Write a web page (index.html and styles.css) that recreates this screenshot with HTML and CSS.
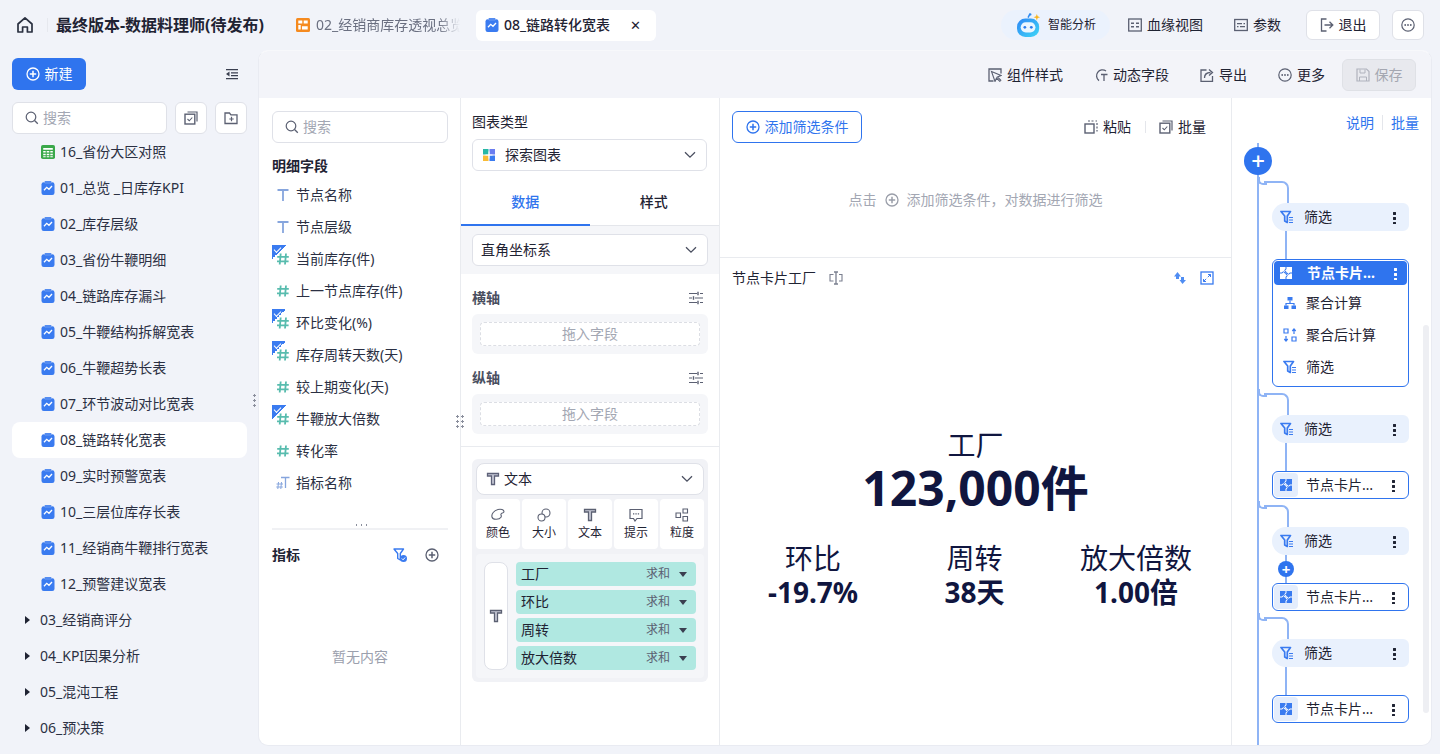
FILE: index.html
```html
<!DOCTYPE html>
<html lang="zh-CN">
<head>
  <meta charset="UTF-8" />
  <title>最终版本-数据料理师(待发布)</title>
  <link rel="stylesheet" href="styles.css">
</head>
<body>
  <svg class="sprite" xmlns="http://www.w3.org/2000/svg">
    <symbol id="i-home" viewBox="0 0 18 18"><path d="M2 8 9 1.800 16 8v8h-4.600v-5H6.600v5H2z" fill="none" stroke="currentColor" stroke-width="1.700" stroke-linejoin="round"/></symbol>
    <symbol id="i-add" viewBox="0 0 14 14"><circle cx="7" cy="7" r="6" fill="none" stroke="currentColor" stroke-width="1.300"/><path d="M7 3.800v6.400M3.800 7h6.400" stroke="currentColor" stroke-width="1.500"/></symbol>
    <symbol id="i-outdent" viewBox="0 0 14 14"><path d="M1 2h12v1.300H1zM6 5.200h7v1.300H6zM6 8h7v1.300H6zM1 11h12v1.300H1z" fill="currentColor"/><path d="M4.500 4.600v5L1 7.100z" fill="currentColor"/></symbol>
    <symbol id="i-search" viewBox="0 0 14 14"><circle cx="6" cy="6" r="4.800" fill="none" stroke="currentColor" stroke-width="1.200"/><path d="m9.500 9.500 3.300 3.300" stroke="currentColor" stroke-width="1.300"/></symbol>
    <symbol id="i-batch" viewBox="0 0 14 14"><path d="M3.500 1h9.500v9.500" fill="none" stroke="currentColor" stroke-width="1.200"/><rect x="1" y="3.200" width="9.800" height="9.800" fill="none" stroke="currentColor" stroke-width="1.400"/><path d="m3.500 8 1.800 1.800 3-3.300" fill="none" stroke="currentColor" stroke-width="1.100"/></symbol>
    <symbol id="i-folder" viewBox="0 0 14 14"><path d="M1 2h4.500l1.400 1.800H13V12.500H1z" fill="none" stroke="currentColor" stroke-width="1.300"/><path d="M7.500 5.800v4.400M5.300 8h4.400" stroke="currentColor" stroke-width="1.200"/></symbol>
    <symbol id="i-chart" viewBox="0 0 14 14"><rect x="0.500" y="1.200" width="13" height="12.800" rx="2.200" fill="#3a7bf0"/><rect x="3.500" y="0" width="7" height="2" rx="0.800" fill="#3a7bf0" stroke="#f1f3f9" stroke-width="0.300"/><path d="m3 9.300 2.700-3 2.300 2 3-3.300" fill="none" stroke="#fff" stroke-width="1.300"/></symbol>
    <symbol id="i-table" viewBox="0 0 14 14"><rect width="14" height="14" rx="1.800" fill="#3aa84a"/><path d="M2.200 3h9.600v1.700H2.200zM2.200 6h2.500v1.600H2.200zM5.700 6h2.600v1.600H5.700zM9.300 6h2.500v1.600H9.300zM2.200 8.700h2.500v1.600H2.200zM5.700 8.700h2.600v1.600H5.700zM9.300 8.700h2.500v1.600H9.300zM2.200 11.300h2.500v1H2.200zM5.700 11.300h2.600v1H5.700zM9.300 11.300h2.500v1H9.300z" fill="#fff"/></symbol>
    <symbol id="i-orange" viewBox="0 0 14 14"><rect width="14" height="14" rx="1.500" fill="#f58a1f"/><path d="M2.300 2.400h4v3.200h-4zM7.700 2.400h4v3.200h-4zM2.300 7h2.400v4.600H2.300zM6 8.300h5.700v3.300H6z" fill="#fff"/></symbol>
    <symbol id="i-bot" viewBox="0 0 28 26"><path d="M13 5 15 1" stroke="#2f8cf2" stroke-width="1.600"/><circle cx="15.300" cy="1.500" r="1.300" fill="#2f8cf2"/><path d="M22.500 1l.9 2.600 2.600.9-2.600.9-.9 2.600-.9-2.600-2.600-.9 2.600-.9z" fill="#f8b51e"/><rect x="1" y="6" width="24" height="20" rx="9" fill="url(#botfill)"/><rect x="5" y="10" width="16" height="11" rx="5.500" fill="#eaf6ff"/><circle cx="9.500" cy="15.500" r="1.500" fill="#2a7bec"/><circle cx="16.500" cy="15.500" r="1.500" fill="#2a7bec"/><defs><linearGradient id="botfill" x1="0" y1="0" x2="1" y2="1"><stop offset="0" stop-color="#2e86f5"/><stop offset="1" stop-color="#3dd7f7"/></linearGradient></defs></symbol>
    <symbol id="i-lineage" viewBox="0 0 14 14"><rect x="0.700" y="1" width="12.600" height="12" fill="none" stroke="currentColor" stroke-width="1.300"/><path d="M3 4.500h3v1.500H3zM3 8h3v1.500H3zM8 4.500h3v1.500H8zM8 8h3v1.500H8z" fill="currentColor"/></symbol>
    <symbol id="i-param" viewBox="0 0 14 14"><rect x="0.700" y="1.500" width="12.600" height="11" fill="none" stroke="currentColor" stroke-width="1.300"/><path d="M3 5h5v1.200H3zM9.500 5H11v1.200H9.500zM3 8h1.500v1.200H3zM6 8h5v1.200H6z" fill="currentColor"/></symbol>
    <symbol id="i-exit" viewBox="0 0 14 14"><path d="M6.500 1H1.500v12h5" fill="none" stroke="currentColor" stroke-width="1.300"/><path d="M4.500 7h8M9.500 3.800 12.800 7l-3.300 3.200" fill="none" stroke="currentColor" stroke-width="1.300"/></symbol>
    <symbol id="i-more" viewBox="0 0 14 14"><circle cx="7" cy="7" r="6.200" fill="none" stroke="currentColor" stroke-width="1.200"/><circle cx="4.200" cy="7" r="0.900" fill="currentColor"/><circle cx="7" cy="7" r="0.900" fill="currentColor"/><circle cx="9.800" cy="7" r="0.900" fill="currentColor"/></symbol>
    <symbol id="i-style" viewBox="0 0 14 14"><path d="M5.500 13H1V1h12v4.500" fill="none" stroke="currentColor" stroke-width="1.300"/><path d="m3.500 3.500 9.500 4-3.500 1.500 3.300 3.300-1 1L8.500 10 7 13.500z" fill="none" stroke="currentColor" stroke-width="1.100"/></symbol>
    <symbol id="i-dyn" viewBox="0 0 14 14"><path d="M12 3A5.800 5.800 0 1 0 5 12.600" fill="none" stroke="currentColor" stroke-width="1.300"/><path d="M7 6.500h6.500M10 6.500V13" stroke="currentColor" stroke-width="1.300"/></symbol>
    <symbol id="i-export" viewBox="0 0 14 14"><path d="M6.500 2H1v11.500h11.500V8" fill="none" stroke="currentColor" stroke-width="1.300"/><path d="M4.500 10c0-3.500 2.500-5.500 6-5.500M9 1.500l3.500 3-3.500 3" fill="none" stroke="currentColor" stroke-width="1.300"/></symbol>
    <symbol id="i-save" viewBox="0 0 14 14"><path d="M1 1h9.500L13 3.500V13H1z" fill="none" stroke="currentColor" stroke-width="1.200"/><path d="M4 1.500v3.500h5V1.500M3.500 13V9h7v4" fill="none" stroke="currentColor" stroke-width="1"/></symbol>
    <symbol id="i-paste" viewBox="0 0 14 14"><rect x="1" y="4" width="9" height="9" fill="none" stroke="currentColor" stroke-width="1.400"/><path d="M4 1h2M7.500 1h2M11.500 1H13M13 3v2M13 6.500v2M13 10v1.500" stroke="currentColor" stroke-width="1.200"/></symbol>
    <symbol id="i-t" viewBox="0 0 14 14"><path d="M1.500 1.500h11v2.500h-4v8.500h-3V4h-4z" fill="#c9cbd8" stroke="currentColor" stroke-width="1.300"/></symbol>
    <symbol id="i-tfield" viewBox="0 0 14 14"><path d="M1.500 2h11M7 2v11" stroke="#86a5dd" stroke-width="1.800"/></symbol>
    <symbol id="i-hash" viewBox="0 0 14 14"><path d="M4.700 1.500 3.700 12.500M10 1.500 9 12.500M1.200 4.800h11.600M1 9.300h11.600" stroke="#58bcae" stroke-width="1.800"/></symbol>
    <symbol id="i-numt" viewBox="0 0 14 14"><path d="M5 1.500h8.500M9.500 1.500V12" stroke="#86a5dd" stroke-width="1.300"/><path d="M2.500 6 1.800 13M5.500 6 4.800 13M.5 8h6.500M.3 11h6.500" stroke="#86a5dd" stroke-width="1"/></symbol>
    <symbol id="i-filter" viewBox="0 0 14 14"><path d="M1 1.500h9.500L7.300 6v6.500L4.700 11V6z" fill="none" stroke="#3a7bf0" stroke-width="1.700" stroke-linejoin="round"/><path d="M9 7.500h4M9 10h4M9 12.500h4" stroke="#3a7bf0" stroke-width="1.200"/></symbol>
    <symbol id="i-filtercheck" viewBox="0 0 14 14"><path d="M1 1h9.500L7.300 5.500V12L4.700 10.500V5.500z" fill="none" stroke="#3a7bf0" stroke-width="1.400" stroke-linejoin="round"/><circle cx="10.500" cy="10.500" r="3.500" fill="#3a7bf0"/><path d="m8.800 10.500 1.300 1.300 2-2.300" fill="none" stroke="#fff" stroke-width="1"/></symbol>
    <symbol id="i-puzzle" viewBox="0 0 12 12"><rect width="12" height="12" fill="currentColor"/><path d="M0 6h2.300a1.200 1.200 0 0 1 2.400 0h2.600a1.200 1.200 0 0 0 2.400 0H12M6 0v2.300a1.200 1.200 0 0 0 0 2.400v2.600a1.200 1.200 0 0 1 0 2.400V12" fill="none" stroke="var(--cut)" stroke-width="1"/></symbol>
    <symbol id="i-aggr" viewBox="0 0 14 14"><path d="M4.500 1h5v3.500h-5zM1 9.500h4.500V13H1zM8.500 9.500H13V13H8.500z" fill="#3a7bf0"/><path d="M7 4.500v3M3 9.500v-2h8v2" fill="none" stroke="#3a7bf0" stroke-width="1.200"/></symbol>
    <symbol id="i-after" viewBox="0 0 14 14"><path d="M1 1h4v4H1zM9 9h4v4H9z" fill="none" stroke="#3a7bf0" stroke-width="1.200"/><path d="M11 6V1.500M9.300 3 11 1l1.700 2M3 8v4.500M1.300 11 3 13l1.700-2" fill="none" stroke="#3a7bf0" stroke-width="1.200"/></symbol>
    <symbol id="i-chev" viewBox="0 0 12 8"><path d="M1 1.200 6 6.200l5-5" fill="none" stroke="currentColor" stroke-width="1.300"/></symbol>
    <symbol id="i-sliders" viewBox="0 0 14 14"><path d="M0 2.500h8M11 2.500h3M0 7h3M6 7h8M0 11.500h8M11 11.500h3" stroke="currentColor" stroke-width="1.200"/><path d="M9 .8v3.400M4.500 5.300v3.400M9 9.800v3.400" stroke="currentColor" stroke-width="1.400"/></symbol>
    <symbol id="i-palette" viewBox="0 0 14 14"><path d="M1 9c-.8-3 2-6.500 6-7.500 3-.7 6 .2 6 2.300 0 1.500-2.500 1-3 2.200-.5 1 1 1.800 0 3.200C8.500 11.500 2 12.500 1 9z" fill="none" stroke="currentColor" stroke-width="1.100"/></symbol>
    <symbol id="i-size" viewBox="0 0 14 14"><circle cx="9" cy="5" r="4" fill="none" stroke="currentColor" stroke-width="1.100"/><circle cx="4.500" cy="9.500" r="3.500" fill="#fff" stroke="currentColor" stroke-width="1.100"/></symbol>
    <symbol id="i-tip" viewBox="0 0 14 14"><path d="M1 1.500h12v9H8L6 13 4.500 10.500H1z" fill="none" stroke="currentColor" stroke-width="1.200"/><path d="M4 5.300h1.300v1.300H4zM6.400 5.300h1.300v1.300H6.400zM8.800 5.300h1.300v1.300H8.800z" fill="currentColor"/></symbol>
    <symbol id="i-grain" viewBox="0 0 14 14"><path d="M1 5h4.500v4.500H1zM8 1h4.500v4H8zM8 8.500h4.500v4.500H8z" fill="none" stroke="currentColor" stroke-width="1.100"/></symbol>
    <symbol id="i-swap" viewBox="0 0 14 14"><path d="M4.500 1 8 5.500H6V8H3V5.500H1zM9.500 13 6.500 9H8V6h3v3h2z" fill="#4f8df3"/></symbol>
    <symbol id="i-expand" viewBox="0 0 14 14"><rect x="1" y="1" width="12" height="12" fill="none" stroke="#3a7bf0" stroke-width="1.300"/><path d="M8 3.500h2.500V6M10.500 3.500 7.800 6.200M6 10.500H3.500V8M3.500 10.500l2.700-2.700" fill="none" stroke="#3a7bf0" stroke-width="1"/></symbol>
    <symbol id="i-rename" viewBox="0 0 14 14"><path d="M4.500 3.500H1v6.500h3.500M10 3.500h3v6.500h-3" fill="none" stroke="currentColor" stroke-width="1.100"/><path d="M5 1h4M5 13h4M7 1v12" stroke="currentColor" stroke-width="1.300"/></symbol>
    <symbol id="i-explore" viewBox="0 0 12 12"><path d="M0 0h5.500v5.500H0z" fill="#27b7a5"/><path d="M6.500 0H12v5.500H6.500z" fill="#6a7df0"/><path d="M0 6.500h5.500V12H0z" fill="#f9bb35"/><path d="M6.500 6.500H12V12H6.500z" fill="#3a7bf0"/><path d="M6 2.500v7M2.500 6h7" stroke="#fff" stroke-width="0.900"/></symbol>
  </svg>

  <header class="topbar">
    <svg class="icon home"><use href="#i-home"/></svg>
    <span class="top-sep"></span>
    <h1 class="title">最终版本-数据料理师(待发布)</h1>
    <div class="tab tab-idle">
      <svg class="icon"><use href="#i-orange"/></svg>
      <span class="tab-clip">02_经销商库存透视总览</span>
    </div>
    <div class="tab tab-active">
      <svg class="icon"><use href="#i-chart"/></svg>
      <span>08_链路转化宽表</span>
      <span class="tab-close">✕</span>
    </div>
    <div class="top-actions">
      <div class="ai-pill"><svg class="bot"><use href="#i-bot"/></svg>智能分析</div>
      <div class="act act-lineage"><svg class="icon"><use href="#i-lineage"/></svg>血缘视图</div>
      <div class="act act-param"><svg class="icon"><use href="#i-param"/></svg>参数</div>
      <button class="btn-exit"><svg class="icon"><use href="#i-exit"/></svg>退出</button>
      <button class="btn-dots"><svg class="icon"><use href="#i-more"/></svg></button>
    </div>
  </header>

  <div class="layout">
    <aside class="sidebar">
      <div class="side-head">
        <button class="btn-new"><svg class="icon"><use href="#i-add"/></svg>新建</button>
        <svg class="icon outdent"><use href="#i-outdent"/></svg>
      </div>
      <div class="side-search">
        <div class="search-box"><svg class="icon"><use href="#i-search"/></svg>搜索</div>
        <button class="square"><svg class="icon"><use href="#i-batch"/></svg></button>
        <button class="square"><svg class="icon"><use href="#i-folder"/></svg></button>
      </div>
      <ul class="tree">
        <li class="leaf"><svg class="icon"><use href="#i-table"/></svg>16_省份大区对照</li>
        <li class="leaf"><svg class="icon"><use href="#i-chart"/></svg>01_总览 _日库存KPI</li>
        <li class="leaf"><svg class="icon"><use href="#i-chart"/></svg>02_库存层级</li>
        <li class="leaf"><svg class="icon"><use href="#i-chart"/></svg>03_省份牛鞭明细</li>
        <li class="leaf"><svg class="icon"><use href="#i-chart"/></svg>04_链路库存漏斗</li>
        <li class="leaf"><svg class="icon"><use href="#i-chart"/></svg>05_牛鞭结构拆解宽表</li>
        <li class="leaf"><svg class="icon"><use href="#i-chart"/></svg>06_牛鞭超势长表</li>
        <li class="leaf"><svg class="icon"><use href="#i-chart"/></svg>07_环节波动对比宽表</li>
        <li class="leaf current"><svg class="icon"><use href="#i-chart"/></svg>08_链路转化宽表</li>
        <li class="leaf"><svg class="icon"><use href="#i-chart"/></svg>09_实时预警宽表</li>
        <li class="leaf"><svg class="icon"><use href="#i-chart"/></svg>10_三层位库存长表</li>
        <li class="leaf"><svg class="icon"><use href="#i-chart"/></svg>11_经销商牛鞭排行宽表</li>
        <li class="leaf"><svg class="icon"><use href="#i-chart"/></svg>12_预警建议宽表</li>
        <li class="branch"><i class="caret"></i>03_经销商评分</li>
        <li class="branch"><i class="caret"></i>04_KPI因果分析</li>
        <li class="branch"><i class="caret"></i>05_混沌工程</li>
        <li class="branch"><i class="caret"></i>06_预决策</li>
      </ul>
      <span class="grip grip-side"></span>
    </aside>

    <main class="main">
      <div class="toolbar">
        <div class="tool"><svg class="icon"><use href="#i-style"/></svg>组件样式</div>
        <div class="tool"><svg class="icon"><use href="#i-dyn"/></svg>动态字段</div>
        <div class="tool"><svg class="icon"><use href="#i-export"/></svg>导出</div>
        <div class="tool"><svg class="icon"><use href="#i-more"/></svg>更多</div>
        <button class="btn-save"><svg class="icon"><use href="#i-save"/></svg>保存</button>
      </div>

      <div class="panels">
        <section class="fields">
          <div class="search-box field-search"><svg class="icon"><use href="#i-search"/></svg>搜索</div>
          <h3 class="field-title">明细字段</h3>
          <ul class="field-list">
            <li><svg class="icon"><use href="#i-tfield"/></svg>节点名称</li>
            <li><svg class="icon"><use href="#i-tfield"/></svg>节点层级</li>
            <li class="checked"><svg class="icon"><use href="#i-hash"/></svg>当前库存(件)</li>
            <li><svg class="icon"><use href="#i-hash"/></svg>上一节点库存(件)</li>
            <li class="checked"><svg class="icon"><use href="#i-hash"/></svg>环比变化(%)</li>
            <li class="checked"><svg class="icon"><use href="#i-hash"/></svg>库存周转天数(天)</li>
            <li><svg class="icon"><use href="#i-hash"/></svg>较上期变化(天)</li>
            <li class="checked"><svg class="icon"><use href="#i-hash"/></svg>牛鞭放大倍数</li>
            <li><svg class="icon"><use href="#i-hash"/></svg>转化率</li>
            <li><svg class="icon"><use href="#i-numt"/></svg>指标名称</li>
          </ul>
          <div class="field-divider"><span></span></div>
          <div class="metric-head">
            <h3>指标</h3>
            <svg class="icon"><use href="#i-filtercheck"/></svg>
            <svg class="icon add-metric"><use href="#i-add"/></svg>
          </div>
          <div class="empty">暂无内容</div>
          <span class="grip grip-fields"></span>
        </section>

        <section class="config">
          <div class="config-top">
            <label class="cfg-label">图表类型</label>
            <div class="select"><svg class="icon explore"><use href="#i-explore"/></svg>探索图表<svg class="chev"><use href="#i-chev"/></svg></div>
          </div>
          <div class="tabs">
            <div class="cfg-tab on">数据</div>
            <div class="cfg-tab">样式</div>
          </div>
          <div class="coord">
            <div class="select">直角坐标系<svg class="chev"><use href="#i-chev"/></svg></div>
          </div>
          <div class="axes">
            <div class="axis-head"><span>横轴</span><svg class="icon"><use href="#i-sliders"/></svg></div>
            <div class="drop"><div class="drop-in">拖入字段</div></div>
            <div class="axis-head"><span>纵轴</span><svg class="icon"><use href="#i-sliders"/></svg></div>
            <div class="drop"><div class="drop-in">拖入字段</div></div>
          </div>
          <div class="marks-wrap">
            <div class="marks">
              <div class="select"><svg class="icon mark-t"><use href="#i-t"/></svg>文本<svg class="chev"><use href="#i-chev"/></svg></div>
              <div class="mark-tools">
                <div><svg class="icon"><use href="#i-palette"/></svg>颜色</div>
                <div><svg class="icon"><use href="#i-size"/></svg>大小</div>
                <div><svg class="icon"><use href="#i-t"/></svg>文本</div>
                <div><svg class="icon"><use href="#i-tip"/></svg>提示</div>
                <div><svg class="icon"><use href="#i-grain"/></svg>粒度</div>
              </div>
              <div class="mark-fields">
                <div class="mark-slot"><svg class="icon"><use href="#i-t"/></svg></div>
                <div class="pills">
                  <div class="pill">工厂<em>求和</em><i class="tri"></i></div>
                  <div class="pill">环比<em>求和</em><i class="tri"></i></div>
                  <div class="pill">周转<em>求和</em><i class="tri"></i></div>
                  <div class="pill">放大倍数<em>求和</em><i class="tri"></i></div>
                </div>
              </div>
            </div>
          </div>
        </section>

        <section class="canvas">
          <div class="filter-area">
            <div class="filter-row">
              <button class="btn-filter"><svg class="icon"><use href="#i-add"/></svg>添加筛选条件</button>
              <div class="filter-acts">
                <span><svg class="icon"><use href="#i-paste"/></svg>粘贴</span>
                <b></b>
                <span><svg class="icon"><use href="#i-batch"/></svg>批量</span>
              </div>
            </div>
            <p class="filter-hint">点击<svg class="icon"><use href="#i-add"/></svg>添加筛选条件，对数据进行筛选</p>
          </div>
          <div class="chart-head">
            <span>节点卡片工厂</span>
            <svg class="icon rename"><use href="#i-rename"/></svg>
            <svg class="icon push"><use href="#i-swap"/></svg>
            <svg class="icon"><use href="#i-expand"/></svg>
          </div>
          <div class="kpi">
            <div class="kpi-label">工厂</div>
            <div class="kpi-main">123,000件</div>
            <div class="kpi-row">
              <div><span>环比</span><strong>-19.7%</strong></div>
              <div><span>周转</span><strong>38天</strong></div>
              <div><span>放大倍数</span><strong>1.00倍</strong></div>
            </div>
          </div>
        </section>

        <section class="flow">
          <div class="flow-links"><a>说明</a><b></b><a>批量</a></div>
          <div class="flow-body">
            <span class="flow-add">+</span>
            <div class="flow-group first">
              <div class="node-filter"><svg class="icon"><use href="#i-filter"/></svg>筛选<span class="kebab"></span></div>
              <div class="node-card open">
                <div class="node-head"><svg class="icon"><use href="#i-puzzle"/></svg><span>节点卡片…</span><span class="kebab"></span></div>
                <div class="node-step"><svg class="icon"><use href="#i-aggr"/></svg>聚合计算</div>
                <div class="node-step"><svg class="icon"><use href="#i-after"/></svg>聚合后计算</div>
                <div class="node-step"><svg class="icon"><use href="#i-filter"/></svg>筛选</div>
              </div>
            </div>
            <div class="flow-group">
              <div class="node-filter"><svg class="icon"><use href="#i-filter"/></svg>筛选<span class="kebab"></span></div>
              <div class="node-card">
                <div class="node-line"><i><svg class="icon"><use href="#i-puzzle"/></svg></i><span>节点卡片…</span><span class="kebab"></span></div>
              </div>
            </div>
            <div class="flow-group">
              <div class="node-filter"><svg class="icon"><use href="#i-filter"/></svg>筛选<span class="kebab"></span></div>
              <span class="mini-add">+</span>
              <div class="node-card">
                <div class="node-line"><i><svg class="icon"><use href="#i-puzzle"/></svg></i><span>节点卡片…</span><span class="kebab"></span></div>
              </div>
            </div>
            <div class="flow-group">
              <div class="node-filter"><svg class="icon"><use href="#i-filter"/></svg>筛选<span class="kebab"></span></div>
              <div class="node-card">
                <div class="node-line"><i><svg class="icon"><use href="#i-puzzle"/></svg></i><span>节点卡片…</span><span class="kebab"></span></div>
              </div>
            </div>
            <span class="flow-scroll"></span>
          </div>
        </section>
      </div>
    </main>
  </div>
</body>
</html>
```

FILE: styles.css
```css
* {
  box-sizing: border-box;
}

body {
  margin: 0;
  height: 100vh;
  overflow: hidden;
  display: flex;
  flex-direction: column;
  background: #f1f3f9;
  color: #1f2333;
  font-family: "Noto Sans", "Noto Sans CJK SC", sans-serif;
  font-size: 14px;
  line-height: 20px;
}

button {
  font: inherit;
  color: inherit;
  cursor: pointer;
}

ul {
  list-style: none;
  margin: 0;
  padding: 0;
}

h1, h3, p {
  margin: 0;
}

.sprite {
  position: absolute;
  width: 0;
  height: 0;
}

.icon {
  --cut: #fff;
  width: 14px;
  height: 14px;
  flex: none;
  color: #5b6072;
}

/* top bar */
.topbar {
  height: 50px;
  flex: none;
  display: flex;
  align-items: center;
  padding-left: 16px;
}

.home {
  width: 18px;
  height: 18px;
  color: #2a3040;
}

.top-sep {
  width: 1px;
  height: 14px;
  margin: 0 8px 0 13px;
  background: #e6e8ee;
}

.title {
  width: 232px;
  font-size: 16px;
  font-weight: 700;
  white-space: nowrap;
}

.tab {
  display: flex;
  align-items: center;
  height: 31px;
  gap: 6px;
}

.tab-idle {
  width: 188px;
  padding-left: 8px;
  color: #6a6f80;
}

.tab-clip {
  width: 144px;
  overflow: hidden;
  white-space: nowrap;
  -webkit-mask-image: linear-gradient(to right, #000 85%, transparent);
  mask-image: linear-gradient(to right, #000 85%, transparent);
}

.tab-active {
  width: 180px;
  padding: 0 15px 0 9px;
  gap: 5px;
  background: #fff;
  border-radius: 6px;
  font-weight: 500;
}

.tab-close {
  margin-left: auto;
  font-size: 13px;
}

.top-actions {
  margin-left: auto;
  display: flex;
  align-items: center;
  padding-right: 16px;
}

.ai-pill {
  width: 109px;
  height: 30px;
  display: flex;
  align-items: center;
  gap: 6px;
  padding-left: 15px;
  border-radius: 15px;
  background: #ebf2fd;
  font-size: 12px;
}

.bot {
  width: 26px;
  height: 24px;
  flex: none;
}

.act {
  display: flex;
  align-items: center;
  gap: 5px;
}

.act-lineage {
  margin-left: 18px;
}

.act-param {
  margin-left: 31px;
}

.btn-exit {
  width: 74px;
  height: 30px;
  margin-left: 25px;
  display: flex;
  align-items: center;
  justify-content: center;
  gap: 5px;
  background: #fff;
  border: 1px solid #dfe1e8;
  border-radius: 6px;
}

.btn-dots {
  width: 32px;
  height: 30px;
  margin-left: 12px;
  padding: 0;
  display: flex;
  align-items: center;
  justify-content: center;
  background: #fff;
  border: 1px solid #dfe1e8;
  border-radius: 6px;
}

/* main layout */
.layout {
  flex: 1;
  min-height: 0;
  display: flex;
}

.sidebar {
  position: relative;
  width: 258px;
  flex: none;
  padding: 8px 11px 0 12px;
  overflow: hidden;
}

.side-head {
  display: flex;
  align-items: center;
  justify-content: space-between;
  padding-right: 8px;
}

.btn-new {
  width: 74px;
  height: 32px;
  display: flex;
  align-items: center;
  justify-content: center;
  gap: 5px;
  color: #fff;
  background: #2f74ee;
  border: 0;
  border-radius: 6px;
}

.btn-new .icon {
  color: #fff;
}

.outdent {
  color: #3a3f50;
}

.side-search {
  display: flex;
  gap: 8px;
  margin: 12px 0 0;
}

.search-box {
  display: flex;
  align-items: center;
  gap: 4px;
  width: 155px;
  height: 32px;
  padding-left: 12px;
  color: #a3a7b3;
  background: #fff;
  border: 1px solid #dfe1e8;
  border-radius: 6px;
}

.square {
  width: 32px;
  height: 32px;
  padding: 0;
  display: flex;
  align-items: center;
  justify-content: center;
  background: #fff;
  border: 1px solid #dfe1e8;
  border-radius: 6px;
}

.tree li {
  display: flex;
  align-items: center;
  height: 36px;
  white-space: nowrap;
  color: #2b3043;
}

.leaf {
  padding-left: 29px;
  gap: 5px;
}

.current {
  background: #fff;
  border-radius: 8px;
}

.branch {
  padding-left: 13px;
  gap: 10px;
}

.caret {
  width: 0;
  height: 0;
  border-left: 5px solid #1f2333;
  border-top: 4.500px solid transparent;
  border-bottom: 4.500px solid transparent;
}

.grip {
  position: absolute;
  background: radial-gradient(circle at center, #8a8e9c 1px, transparent 1.200px) 0 0 / 5px 5px;
}

.grip-side {
  right: 1px;
  top: 343px;
  width: 5px;
  height: 15px;
}

.main {
  flex: 1;
  min-width: 0;
  margin: 0 8px 8px 0;
  display: flex;
  flex-direction: column;
  border: 1px solid #e9ebf2;
  border-top-color: #f7f8fb;
  border-radius: 10px;
  overflow: hidden;
  background: #fff;
}

.toolbar {
  height: 47px;
  flex: none;
  display: flex;
  align-items: center;
  justify-content: flex-end;
  padding-right: 15px;
  background: #f3f4f9;
}

.tool {
  display: flex;
  align-items: center;
  gap: 5px;
  margin-right: 31px;
}

.tool:nth-child(4) {
  margin-right: 17px;
}

.btn-save {
  width: 74px;
  height: 32px;
  display: flex;
  align-items: center;
  justify-content: center;
  gap: 5px;
  color: #a4a7b1;
  background: #e8e9ee;
  border: 1px solid #dfe1e6;
  border-radius: 6px;
}

.btn-save .icon {
  color: #b0b3bd;
}

.panels {
  flex: 1;
  min-height: 0;
  display: flex;
}

/* field list */
.fields {
  position: relative;
  width: 201px;
  flex: none;
  padding: 13px 12px 0 13px;
}

.field-search {
  width: 176px;
}

.field-title {
  margin-top: 13px;
  font-size: 14px;
  font-weight: 700;
}

.field-list {
  margin-top: 3px;
}

.field-list li {
  position: relative;
  display: flex;
  align-items: center;
  gap: 6px;
  height: 32px;
  padding-left: 4px;
  white-space: nowrap;
  color: #2b3043;
}

.checked::before {
  content: "";
  position: absolute;
  left: 0;
  top: 2px;
  width: 14px;
  height: 14px;
  background: linear-gradient(135deg, #3a7bf0 50%, transparent 50%);
}

.checked::after {
  content: "";
  position: absolute;
  left: 2px;
  top: 4px;
  width: 6px;
  height: 3px;
  border-left: 1px solid #fff;
  border-bottom: 1px solid #fff;
  transform: rotate(-45deg);
}

.field-divider {
  position: relative;
  height: 2px;
  margin-top: 29px;
  background: #f0f1f4;
}

.field-divider span {
  position: absolute;
  left: 82px;
  top: -5px;
  width: 15px;
  height: 12px;
  background: radial-gradient(circle at center, #8a8e9c 0.800px, transparent 1px) 0 -4px / 5px 12px;
}

.metric-head {
  display: flex;
  align-items: center;
  margin-top: 15px;
  padding-right: 9px;
}

.metric-head h3 {
  flex: 1;
  font-size: 14px;
  font-weight: 700;
}

.add-metric {
  margin-left: 18px;
}

.empty {
  margin-top: 82px;
  text-align: center;
  color: #9ba0ad;
}

.grip-fields {
  right: -5px;
  top: 316px;
  width: 10px;
  height: 15px;
}

/* chart config */
.config {
  width: 260px;
  flex: none;
  border-left: 1px solid #e9ebef;
  border-right: 1px solid #e9ebef;
  display: flex;
  flex-direction: column;
}

.config-top {
  padding: 14px 12px 0 11px;
}

.cfg-label {
  display: block;
  height: 20px;
}

.select {
  display: flex;
  align-items: center;
  height: 32px;
  padding: 0 10px;
  margin-top: 7px;
  background: #fff;
  border: 1px solid #dfe1e8;
  border-radius: 6px;
  gap: 6px;
}

.chev {
  width: 12px;
  height: 8px;
  margin-left: auto;
  color: #4a4f60;
}

.explore {
  width: 12px;
  height: 12px;
  margin-right: 4px;
}

.tabs {
  display: flex;
  height: 47px;
  margin-top: 8px;
  padding-right: 1px;
  border-bottom: 1px solid #e4e6eb;
}

.cfg-tab {
  flex: 1;
  display: flex;
  align-items: center;
  justify-content: center;
  font-weight: 500;
}

.cfg-tab.on {
  color: #2f74ee;
  border-bottom: 2px solid #2f74ee;
  margin-bottom: -1px;
}

.coord {
  height: 48px;
  padding: 8px 11px;
  background: #f5f6f9;
}

.coord .select {
  margin-top: 0;
  padding-left: 8px;
}

.axes {
  padding: 14px 11px 12px;
  border-bottom: 1px solid #e9ebef;
}

.axis-head {
  display: flex;
  align-items: center;
  justify-content: space-between;
  height: 20px;
  padding-right: 5px;
  color: #4a4f60;
  font-weight: 700;
}

.drop {
  height: 40px;
  margin: 6px 0 14px;
  padding: 8px;
  background: #f5f6f9;
  border-radius: 6px;
}

.drop:last-child {
  margin-bottom: 0;
}

.drop-in {
  height: 24px;
  line-height: 22px;
  text-align: center;
  color: #a3a7b3;
  background: #fff;
  border: 1px dashed #dcdee4;
  border-radius: 4px;
}

.marks-wrap {
  padding: 12px 11px;
}

.marks {
  height: 223px;
  padding: 4px;
  background: #f1f2f6;
  border-radius: 6px;
}

.marks .select {
  margin-top: 0;
  padding-left: 9px;
  border-radius: 8px;
  gap: 4px;
}

.mark-t {
  color: #5d6178;
}

.mark-tools {
  display: flex;
  gap: 2px;
  margin-top: 4px;
}

.mark-tools div {
  width: 44px;
  height: 50px;
  display: flex;
  flex-direction: column;
  align-items: center;
  justify-content: center;
  gap: 3px;
  font-size: 12px;
  line-height: 16px;
  background: #fff;
  border-radius: 4px;
}

.mark-fields {
  display: flex;
  gap: 8px;
  height: 124px;
  margin-top: 5px;
  padding: 8px;
  background: #f5f6f9;
  border-radius: 4px;
}

.mark-slot {
  width: 24px;
  display: flex;
  align-items: center;
  justify-content: center;
  background: #fff;
  border: 1px solid #dfe1e8;
  border-radius: 8px;
}

.pills {
  flex: 1;
  display: flex;
  flex-direction: column;
  gap: 4px;
}

.pill {
  display: flex;
  align-items: center;
  height: 24px;
  padding: 0 9px 0 5px;
  background: #b0e8e1;
  border-radius: 4px;
  white-space: nowrap;
}

.pill em {
  margin-left: auto;
  font-style: normal;
  font-size: 12px;
  color: #5b6072;
}

.tri {
  width: 0;
  height: 0;
  margin-left: 9px;
  border-top: 5px solid #3a3f50;
  border-left: 4.500px solid transparent;
  border-right: 4.500px solid transparent;
}

/* chart canvas */
.canvas {
  flex: 1;
  min-width: 0;
  display: flex;
  flex-direction: column;
}

.filter-area {
  height: 160px;
  flex: none;
  padding: 13px 12px 0;
  border-bottom: 1px solid #e9ebef;
}

.filter-row {
  display: flex;
  align-items: center;
  justify-content: space-between;
  padding-right: 13px;
}

.btn-filter {
  width: 130px;
  height: 32px;
  display: flex;
  align-items: center;
  justify-content: center;
  gap: 5px;
  color: #2f74ee;
  background: #fff;
  border: 1px solid #2f74ee;
  border-radius: 6px;
}

.btn-filter .icon {
  color: #2f74ee;
}

.filter-acts {
  display: flex;
  align-items: center;
}

.filter-acts span {
  display: flex;
  align-items: center;
  gap: 5px;
}

.filter-acts b {
  width: 1px;
  height: 12px;
  margin: 0 13px 0 14px;
  background: #e4e6eb;
}

.filter-hint {
  display: flex;
  align-items: center;
  justify-content: center;
  gap: 8px;
  margin-top: 47px;
  color: #a3a7b3;
}

.filter-hint .icon {
  color: #9a9ea9;
}

.chart-head {
  height: 40px;
  flex: none;
  display: flex;
  align-items: center;
  gap: 13px;
  padding: 0 17px 0 12px;
}

.push {
  margin-left: auto;
}

.rename {
  color: #7a7f8f;
}

.kpi {
  flex: 1;
  display: flex;
  flex-direction: column;
  align-items: center;
  padding-top: 130px;
  color: #10163f;
}

.kpi-label {
  font-size: 28px;
  line-height: 34px;
}

.kpi-main {
  margin-top: 1px;
  font-size: 48px;
  line-height: 50px;
  font-weight: 700;
}

.kpi-row {
  display: flex;
  width: 100%;
  margin-top: 28px;
  padding: 0 30px 0 28px;
  justify-content: space-between;
}

.kpi-row div {
  width: 130px;
  display: flex;
  flex-direction: column;
  align-items: center;
}

.kpi-row span {
  font-size: 28px;
  line-height: 34px;
}

.kpi-row strong {
  font-size: 28px;
  line-height: 34px;
  font-weight: 700;
}

/* flow */
.flow {
  width: 200px;
  flex: none;
  border-left: 1px solid #e9ebef;
  display: flex;
  flex-direction: column;
}

.flow-links {
  height: 45px;
  flex: none;
  display: flex;
  align-items: center;
  justify-content: flex-end;
  gap: 8px;
  padding: 4px 12px 0 0;
  color: #2f74ee;
}

.flow-links b {
  width: 1px;
  height: 15px;
  background: #e4e6eb;
}

.flow-body {
  position: relative;
  flex: 1;
  padding: 38px 0 0 40px;
  background: linear-gradient(#8fb4f5, #8fb4f5) 25px 0 / 2px 100% no-repeat;
}

.flow-add {
  position: absolute;
  left: 12px;
  top: 4px;
  width: 28px;
  height: 28px;
  display: flex;
  align-items: center;
  justify-content: center;
  color: #fff;
  background: #2f74ee;
  border-radius: 50%;
  font-size: 24px;
  font-weight: 500;
}

.flow-group {
  position: relative;
  width: 137px;
  padding-top: 22px;
  margin-bottom: 6px;
}

.flow-group::before {
  content: "";
  position: absolute;
  left: -8px;
  top: 0;
  width: 23px;
  height: 22px;
  border-top: 2px solid #8fb4f5;
  border-right: 2px solid #8fb4f5;
  border-top-right-radius: 7px;
}

.flow-group::after {
  content: "";
  position: absolute;
  left: -14px;
  top: -4px;
  width: 7px;
  height: 6px;
  border-bottom: 2px solid #8fb4f5;
  border-left: 2px solid #8fb4f5;
  border-bottom-left-radius: 5px;
}

.node-filter {
  position: relative;
  z-index: 1;
  display: flex;
  align-items: center;
  gap: 10px;
  height: 28px;
  padding-left: 8px;
  background: #e9f1fd;
  border-radius: 14px 6px 6px 14px;
}

.node-filter::after {
  content: "";
  position: absolute;
  left: 13px;
  top: 28px;
  width: 2px;
  height: 28px;
  background: #8fb4f5;
}

.kebab {
  width: 3px;
  height: 13px;
  margin-left: auto;
  margin-right: 13px;
  background: radial-gradient(circle at center, #1f2333 1.400px, transparent 1.600px) 0 0 / 3px 5px repeat-y;
}

.node-card {
  position: relative;
  z-index: 1;
  margin-top: 28px;
  background: #fff;
  border: 1px solid #2f74ee;
  border-radius: 6px;
}

.open {
  padding-bottom: 3px;
}

.node-head {
  display: flex;
  align-items: center;
  height: 24px;
  margin: 1px 1px 2px;
  padding-left: 6px;
  gap: 15px;
  color: #fff;
  font-weight: 700;
  background: #2f74ee;
  border-radius: 4px;
}

.node-head .icon {
  --cut: #2f74ee;
  width: 12px;
  height: 12px;
  color: #fff;
}

.node-head .kebab {
  margin-right: 10px;
  background-image: radial-gradient(circle at center, #fff 1.400px, transparent 1.600px);
}

.node-step {
  display: flex;
  align-items: center;
  gap: 9px;
  height: 32px;
  padding-left: 10px;
}

.node-line {
  display: flex;
  align-items: center;
  height: 26px;
  gap: 8px;
  padding-left: 1px;
}

.node-line i {
  width: 24px;
  height: 24px;
  display: flex;
  align-items: center;
  justify-content: center;
  background: #e4edfc;
  border-radius: 4px;
}

.node-line .icon {
  width: 12px;
  height: 12px;
  color: #3a7bf0;
}

.mini-add {
  position: absolute;
  z-index: 2;
  left: 6px;
  top: 56px;
  width: 16px;
  height: 16px;
  display: flex;
  align-items: center;
  justify-content: center;
  color: #fff;
  background: #2f74ee;
  border-radius: 50%;
  font-size: 15px;
  font-weight: 700;
}

.flow-scroll {
  position: absolute;
  right: 2px;
  top: 182px;
  width: 6px;
  height: 388px;
  background: #eeeff3;
  border-radius: 3px;
}
```
